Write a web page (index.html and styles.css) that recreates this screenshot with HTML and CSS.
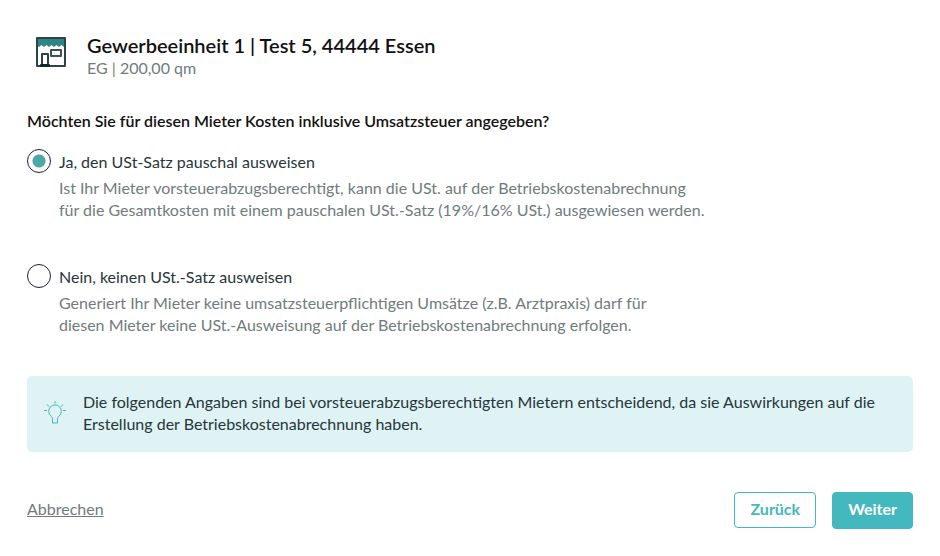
FILE: index.html
```
<!DOCTYPE html>
<html lang="de">
<head>
  <meta charset="UTF-8">
  <title>Umsatzsteuer</title>
  <link rel="stylesheet" href="styles.css">
</head>
<body>
<form class="container">
  <header class="unit">
    <svg class="unit-icon" viewBox="0 0 32 32" aria-hidden="true">
      <path d="M2 2h28v8l-1 1-2.500-2-2.500 2-2.500-2L19 11l-2.500-2L14 11l-2.500-2L9 11 6.500 9 4 11l-2-1z" fill="#2f8585"/>
      <rect x="2" y="2" width="28" height="28" fill="none" stroke="#2c4444" stroke-width="2" stroke-linejoin="round"/>
      <rect x="16" y="14" width="10" height="6" fill="none" stroke="#3f5252" stroke-width="2" stroke-linejoin="round"/>
      <path d="M7 28V18h6v10" fill="none" stroke="#2c4444" stroke-width="2" stroke-linejoin="round"/>
      <rect x="5" y="28" width="10" height="3" rx="1" fill="#0c2a2a"/>
    </svg>
    <div>
      <h1 class="unit-title">Gewerbeeinheit 1 | Test 5, 44444 Essen</h1>
      <p class="unit-info">EG | 200,00 qm</p>
    </div>
  </header>

  <fieldset class="options">
    <legend class="question">Möchten Sie für diesen Mieter Kosten inklusive Umsatzsteuer angegeben?</legend>
    <div class="option">
      <input type="radio" name="ust" id="ust-yes" checked>
      <div>
        <label for="ust-yes">Ja, den USt-Satz pauschal ausweisen</label>
        <p class="option-text">Ist Ihr Mieter vorsteuerabzugsberechtigt, kann die USt. auf der Betriebskostenabrechnung<br>für die Gesamtkosten mit einem pauschalen USt.-Satz (19%/16% USt.) ausgewiesen werden.</p>
      </div>
    </div>
    <div class="option">
      <input type="radio" name="ust" id="ust-no">
      <div>
        <label for="ust-no">Nein, keinen USt.-Satz ausweisen</label>
        <p class="option-text">Generiert Ihr Mieter keine umsatzsteuerpflichtigen Umsätze (z.B. Arztpraxis) darf für<br>diesen Mieter keine USt.-Ausweisung auf der Betriebskostenabrechnung erfolgen.</p>
      </div>
    </div>
  </fieldset>

  <div class="hint">
    <svg class="hint-icon" viewBox="0 0 24 24" aria-hidden="true">
      <path d="M9.500 22v-4c0-1.300-.7-2-1.600-3a6.300 6.300 0 1 1 8.200 0c-.9 1-1.600 1.700-1.600 3v4z"/>
      <path d="M12 0v2.500M4 3.500l2 2.200M20 3.500l-2 2.200M1 9.500h3M20 9.500h3"/>
    </svg>
    <p>Die folgenden Angaben sind bei vorsteuerabzugsberechtigten Mietern entscheidend, da sie Auswirkungen auf die Erstellung der Betriebskostenabrechnung haben.</p>
  </div>

  <footer class="actions">
    <a href="#" class="cancel">Abbrechen</a>
    <button type="button" class="btn btn-outline">Zurück</button>
    <button type="submit" class="btn btn-primary">Weiter</button>
  </footer>
</form>
</body>
</html>
```

FILE: styles.css
```
* {
  box-sizing: border-box;
}
body {
  margin: 0;
  background: #fff;
  color: #26363a;
  font: 16px/22px Lato, sans-serif;
}
h1,
p {
  margin: 0;
}
.container {
  padding: 34px 27px 28px;
}
.unit {
  display: flex;
  gap: 20px;
  padding-left: 8px;
}
.unit-icon {
  flex: none;
  width: 32px;
  height: 32px;
  margin-top: 2px;
}
.unit-title {
  color: #111;
  font-size: 20px;
  font-weight: 600;
  line-height: 23px;
}
.unit-info {
  color: #6f7c7c;
}
.options {
  margin: 31px 0 0;
  padding: 0;
  border: 0;
}
.question {
  margin-bottom: 17px;
  padding: 0;
  color: #111;
  font-weight: 600;
}
.option {
  display: flex;
  gap: 8px;
  margin-bottom: 43px;
}
.option:last-child {
  margin-bottom: 40px;
}
.option input {
  appearance: none;
  flex: none;
  width: 24px;
  height: 24px;
  margin: 0;
  border: 1px solid #1d1d3a;
  border-radius: 50%;
}
.option input:checked {
  background: radial-gradient(circle, #4fa8a8 6px, transparent 7px);
}
.option label {
  display: block;
  padding-top: 2px;
}
.option-text {
  padding-top: 4px;
  color: #6f7c7c;
}
.hint {
  display: flex;
  align-items: center;
  gap: 16px;
  min-height: 76px;
  padding: 15px 16px 17px;
  border-radius: 5px;
  background: #dff3f5;
}
.hint-icon {
  flex: none;
  width: 24px;
  height: 24px;
  fill: none;
  stroke: #43b8be;
}
.actions {
  display: flex;
  align-items: flex-start;
  gap: 16px;
  margin-top: 40px;
}
.cancel {
  margin-right: auto;
  padding-top: 6px;
  color: #6f7c7c;
}
.btn {
  height: 36px;
  padding: 0 15px 2px;
  border: 1px solid #43b8be;
  border-radius: 4px;
  font: bold 16px/22px Lato, sans-serif;
}
.btn-outline {
  background: #fff;
  color: #43b8be;
}
.btn-primary {
  height: 37px;
  padding-bottom: 3px;
  background: #43b8be;
  color: #fff;
}
```
